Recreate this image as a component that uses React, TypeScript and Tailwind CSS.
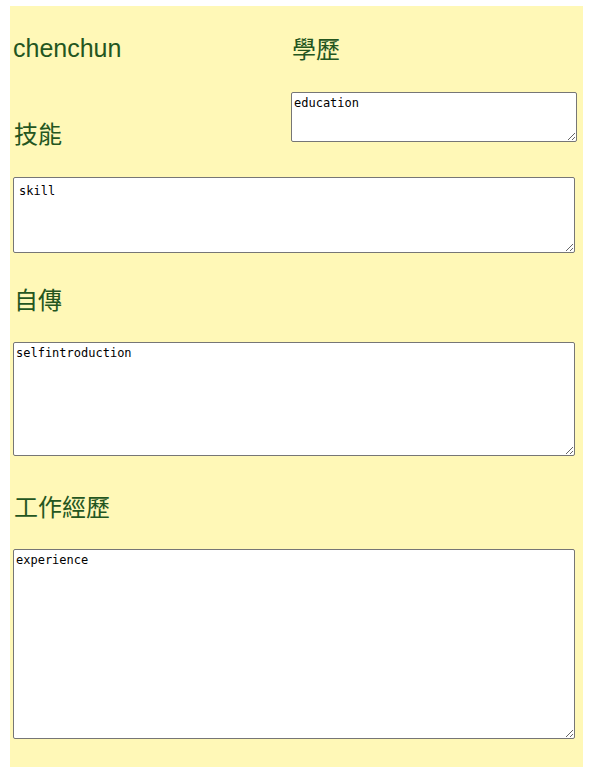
import React from "react";

const heading =
  "text-[24px] leading-[28px] font-normal text-[#24561f] [font-family:'Liberation_Sans','Noto_Sans_CJK_TC',sans-serif]";
const box =
  "block border border-[#767676] rounded-[2px] bg-white text-black text-[12px] leading-[15px] [font-family:'DejaVu_Sans_Mono',monospace] outline-none";

const App: React.FC = () => {
  return (
    <div className="min-h-screen bg-white pt-[6px] pl-[10px]">
      <div className="w-[573px] bg-[#fff8b7] px-[3px] pt-[28px] pb-[28px]">
        <div className="flex">
          <div className="w-[278px]">
            <h2 className={`${heading} text-[25px] text-[#1c4a27]`}>chenchun</h2>
            <h2 className={`${heading} mt-[59px] pl-[1px]`}>技能</h2>
          </div>
          <div className="flex-1">
            <h2 className={`${heading} mt-[2px] pl-[1px]`}>學歷</h2>
            <textarea
              className={`${box} mt-[28px] w-[286px] h-[50px] px-[2px] py-[3px]`}
              defaultValue="education"
            />
          </div>
        </div>
        <textarea
          className={`${box} mt-[28px] w-[562px] h-[76px] px-[5px] py-[6px]`}
          defaultValue="skill"
        />
        <h2 className={`${heading} mt-[34px] pl-[1px]`}>自傳</h2>
        <textarea
          className={`${box} mt-[27px] w-[562px] h-[114px] px-[2px] py-[3px]`}
          defaultValue="selfintroduction"
        />
        <h2 className={`${heading} mt-[38px] pl-[1px]`}>工作經歷</h2>
        <textarea
          className={`${box} mt-[27px] w-[562px] h-[190px] px-[2px] py-[3px]`}
          defaultValue="experience"
        />
      </div>
    </div>
  );
};

export default App;
